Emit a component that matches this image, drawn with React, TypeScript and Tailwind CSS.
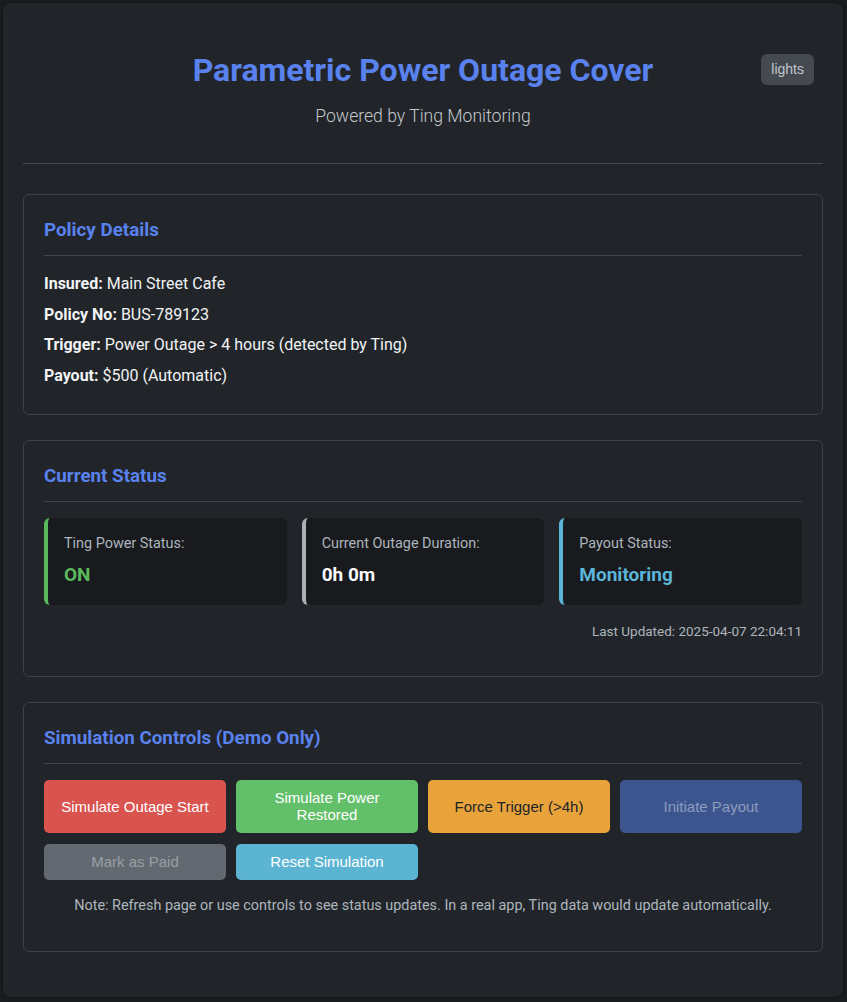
import React from "react";

const Card = ({ title, children }: { title: string; children: React.ReactNode }) => (
  <div className="border border-[#3d4147] rounded-[6px] px-5 pt-[20px] pb-[20px] mb-[25px] bg-[#212529]">
    <h2 className="text-[18.8px] font-bold text-[#5a82ee] leading-[30px] pb-[10px] border-b border-[#41454b] mb-[16px]">{title}</h2>
    {children}
  </div>
);

const StatusBox = ({ label, value, border, color }: { label: string; value: string; border: string; color: string }) => (
  <div className={`flex-1 bg-[#181a1d] rounded-[6px] border-l-4 ${border} pl-4 pt-[15px] pb-[16px]`}>
    <div className="text-[14.4px] text-[#adb5bd] leading-[22px]">{label}</div>
    <div className={`text-[19px] font-bold ${color} leading-[28px] mt-[6px]`}>{value}</div>
  </div>
);

const btn = "h-full rounded-[5px] text-[15px] leading-[17px] px-3 font-['Liberation_Sans',Arial,sans-serif]";

export default function App() {
  return (
    <div className="min-h-[1002px] bg-[#1b1e21] p-[3px] font-['Roboto',sans-serif]">
      <div className="bg-[#212529] rounded-[8px] p-5 shadow-[0_0_6px_rgba(0,0,0,0.5)] h-[994px] w-[840px]">
        <div className="relative pt-[28px] pb-[33px] border-b border-[#44484e] mb-[30px] text-center">
          <h1 className="text-[32px] font-bold text-[#5a82ee] leading-[38px]">Parametric Power Outage Cover</h1>
          <p className="text-[17.6px] font-light text-[#c3c8cd] leading-[27px] mt-[14px]">Powered by Ting Monitoring</p>
          <button className="absolute right-[9px] top-[31px] h-[31px] px-[10px] rounded-[6px] bg-[#454a51] text-[#c0c6cc] text-[14px] font-['Liberation_Sans',Arial,sans-serif]">lights</button>
        </div>

        <Card title="Policy Details">
          <div className="text-[16px] text-[#f1f3f5] leading-[22px] flex flex-col gap-[8.5px] pt-[1px] pb-[7px]">
            <p><span className="font-bold">Insured:</span> Main Street Cafe</p>
            <p><span className="font-bold">Policy No:</span> BUS-789123</p>
            <p><span className="font-bold">Trigger:</span> Power Outage &gt; 4 hours (detected by Ting)</p>
            <p><span className="font-bold">Payout:</span> $500 (Automatic)</p>
          </div>
        </Card>

        <Card title="Current Status">
          <div className="flex gap-[15px]">
            <StatusBox label="Ting Power Status:" value="ON" border="border-[#5cb85c]" color="text-[#5cb85c]" />
            <StatusBox label="Current Outage Duration:" value="0h 0m" border="border-[#aab0b8]" color="text-[#f8f9fa]" />
            <StatusBox label="Payout Status:" value="Monitoring" border="border-[#5bb5d8]" color="text-[#5bb5d8]" />
          </div>
          <div className="text-right text-[13.5px] text-[#adb5bd] leading-[20px] mt-[16px] pb-[15px]">Last Updated: 2025-04-07 22:04:11</div>
        </Card>

        <Card title="Simulation Controls (Demo Only)">
          <div className="grid grid-cols-4 gap-x-[10px] gap-y-[11px]">
            <div className="h-[53px]"><button className={`${btn} w-full bg-[#d9534f] text-white`}>Simulate Outage Start</button></div>
            <div className="h-[53px]"><button className={`${btn} w-full bg-[#63c06a] text-white`}>Simulate Power<br />Restored</button></div>
            <div className="h-[53px]"><button className={`${btn} w-full bg-[#e8a33a] text-[#212529]`}>Force Trigger (&gt;4h)</button></div>
            <div className="h-[53px]"><button className={`${btn} w-full bg-[#3c558f] text-[#8c9cbd]`}>Initiate Payout</button></div>
            <div className="h-[36px]"><button className={`${btn} w-full bg-[#626971] text-[#9aa0a6]`}>Mark as Paid</button></div>
            <div className="h-[36px]"><button className={`${btn} w-full bg-[#5bb4d2] text-white`}>Reset Simulation</button></div>
          </div>
          <p className="text-center text-[14.4px] text-[#adb5bd] leading-[20px] mt-[16px] pb-[15px]">Note: Refresh page or use controls to see status updates. In a real app, Ting data would update automatically.</p>
        </Card>
      </div>
    </div>
  );
}
